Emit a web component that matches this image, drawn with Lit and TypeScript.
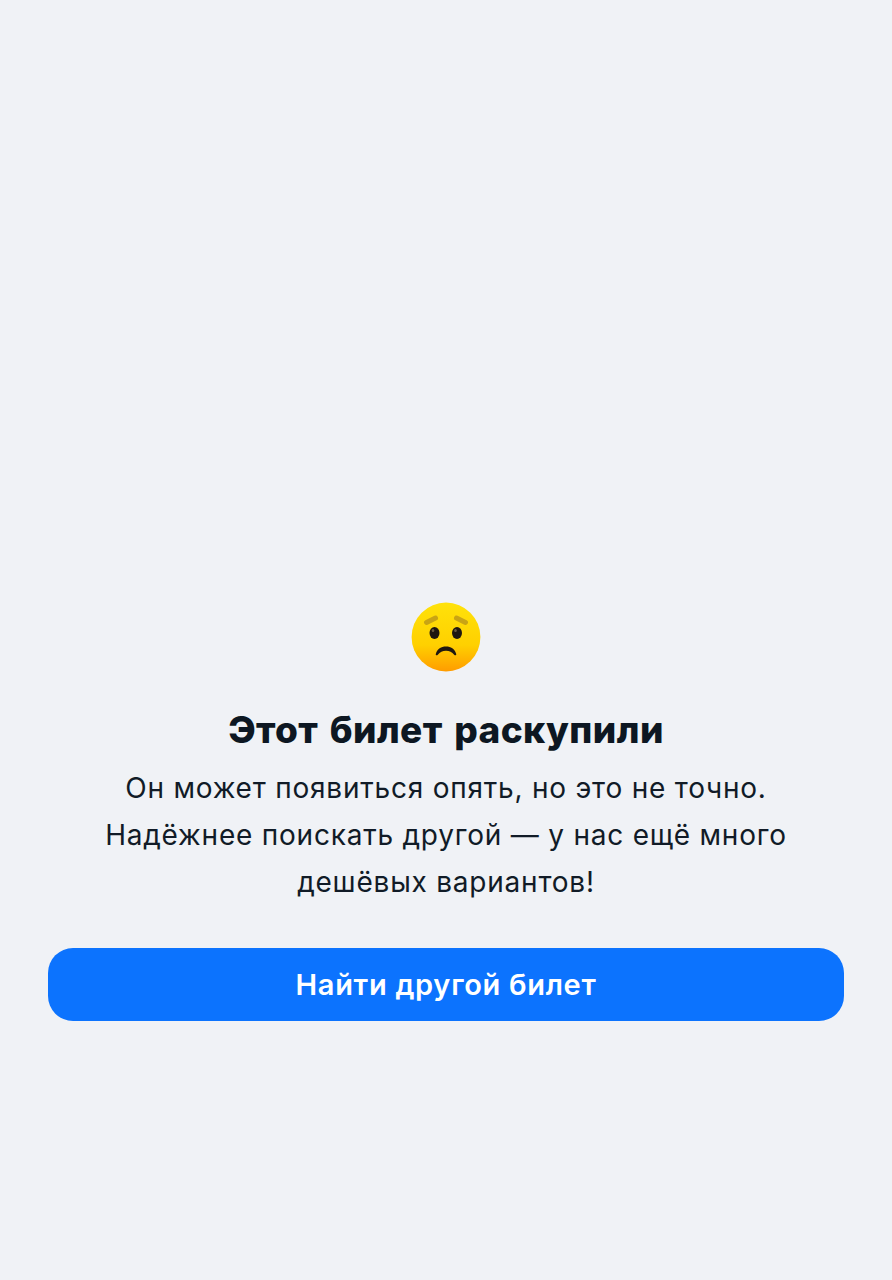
import { LitElement, html, css } from "lit";
import { customElement } from "lit/decorators.js";

@customElement("app-root")
export class AppRoot extends LitElement {
  static styles = css`
    :host { display: block; width: 892px; height: 1280px; background: #f0f2f6; font-family: Inter, "Noto Sans", sans-serif; }
    .wrap { display: flex; flex-direction: column; align-items: center; padding: 602px 48px 0; }
    svg { display: block; width: 70px; height: 70px; }
    h1 { margin: 36px 0 0; font-size: 37px; line-height: 44px; font-weight: 800; color: #0d1722; letter-spacing: 0.4px; word-spacing: 3px; white-space: nowrap; }
    p { margin: 13px 0 0; font-size: 28px; line-height: 47px; color: #111b27; text-align: center; font-weight: 400; letter-spacing: 0.78px; white-space: nowrap; }
    button { margin-top: 42px; width: 796px; height: 73px; border: 0; border-radius: 25px; background: #0c73fe; color: #fff; font: 600 29px Inter, sans-serif; letter-spacing: 0.7px; padding: 0; }
  `;
  render() {
    return html`<div class="wrap">
      <svg viewBox="0 0 70 70">
        <defs><linearGradient id="g" x1="0" y1="0" x2="0" y2="1"><stop offset="0" stop-color="#ffe20a"/><stop offset="0.62" stop-color="#ffd000"/><stop offset="1" stop-color="#ff9c00"/></linearGradient></defs>
        <circle cx="35" cy="35" r="34.4" fill="url(#g)"/>
        <ellipse cx="23.5" cy="31" rx="5" ry="6" fill="#1f1710"/>
        <ellipse cx="46" cy="31" rx="5" ry="6" fill="#1f1710"/>
        <ellipse cx="22" cy="28.5" rx="1.3" ry="1.6" fill="#6a5a40"/>
        <ellipse cx="44.5" cy="28.5" rx="1.3" ry="1.6" fill="#6a5a40"/>
        <path d="M15.5 20.5 L24.5 16 M54.5 20.5 L45.5 16" stroke="#c9a414" stroke-width="5" fill="none" stroke-linecap="round"/>
        <path d="M24.8 52 C26.5 46.5 30 44.6 35 44.6 C40 44.6 43.5 46.5 45.2 52 C45.6 53.4 44 53.8 43.2 52.8 C41 50 38.5 48.8 35 48.8 C31.5 48.8 29 50 26.8 52.8 C26 53.8 24.4 53.4 24.8 52 Z" fill="#1f1710"/>
      </svg>
      <h1>Этот билет раскупили</h1>
      <p>Он может появиться опять, но это не точно.<br>Надёжнее поискать другой — у нас ещё много<br>дешёвых вариантов!</p>
      <button>Найти другой билет</button>
    </div>`;
  }
}
